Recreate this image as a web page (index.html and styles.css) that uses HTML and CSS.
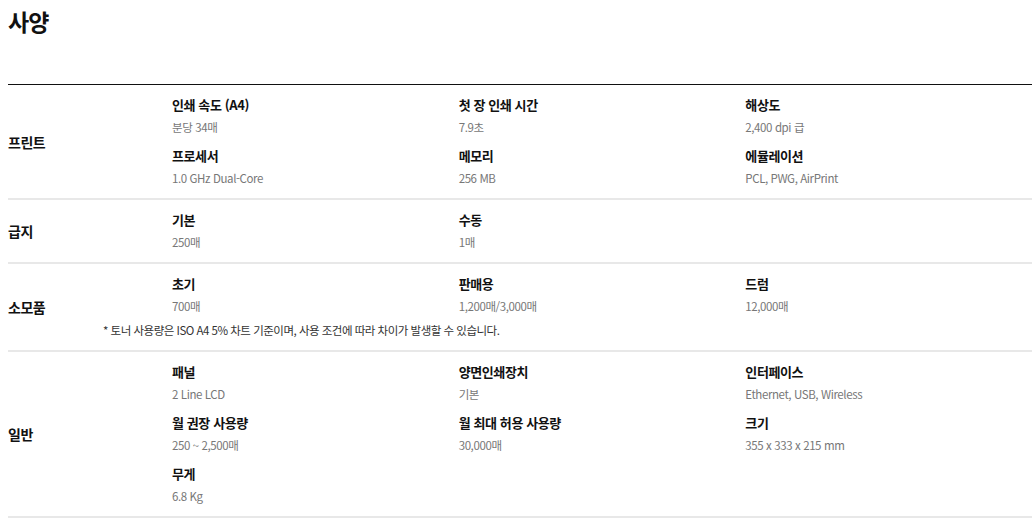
FILE: index.html
```html
<!DOCTYPE html>
<html lang="ko">
<head>
<meta charset="utf-8">
<title>사양</title>
<link rel="stylesheet" href="styles.css">
</head>
<body>
<div class="page">
  <h2 class="heading">사양</h2>
  <div class="specs">
    <section class="row">
      <div class="label">프린트</div>
      <div class="body">
        <div class="grid">
          <div class="item"><div class="t">인쇄 속도 (A4)</div><div class="v">분당 34매</div></div>
          <div class="item"><div class="t">첫 장 인쇄 시간</div><div class="v">7.9초</div></div>
          <div class="item"><div class="t">해상도</div><div class="v">2,400 dpi 급</div></div>
          <div class="item"><div class="t">프로세서</div><div class="v">1.0 GHz Dual-Core</div></div>
          <div class="item"><div class="t">메모리</div><div class="v">256 MB</div></div>
          <div class="item"><div class="t">에뮬레이션</div><div class="v">PCL, PWG, AirPrint</div></div>
        </div>
      </div>
    </section>
    <section class="row">
      <div class="label">급지</div>
      <div class="body">
        <div class="grid">
          <div class="item"><div class="t">기본</div><div class="v">250매</div></div>
          <div class="item"><div class="t">수동</div><div class="v">1매</div></div>
        </div>
      </div>
    </section>
    <section class="row has-note">
      <div class="label">소모품</div>
      <div class="body">
        <div class="grid">
          <div class="item"><div class="t">초기</div><div class="v">700매</div></div>
          <div class="item"><div class="t">판매용</div><div class="v">1,200매/3,000매</div></div>
          <div class="item"><div class="t">드럼</div><div class="v">12,000매</div></div>
        </div>
      </div>
      <p class="note">* 토너 사용량은 ISO A4 5% 차트 기준이며, 사용 조건에 따라 차이가 발생할 수 있습니다.</p>
    </section>
    <section class="row">
      <div class="label">일반</div>
      <div class="body">
        <div class="grid">
          <div class="item"><div class="t">패널</div><div class="v">2 Line LCD</div></div>
          <div class="item"><div class="t">양면인쇄장치</div><div class="v">기본</div></div>
          <div class="item"><div class="t">인터페이스</div><div class="v">Ethernet, USB, Wireless</div></div>
          <div class="item"><div class="t">월 권장 사용량</div><div class="v">250 ~ 2,500매</div></div>
          <div class="item"><div class="t">월 최대 허용 사용량</div><div class="v">30,000매</div></div>
          <div class="item"><div class="t">크기</div><div class="v">355 x 333 x 215 mm</div></div>
          <div class="item"><div class="t">무게</div><div class="v">6.8 Kg</div></div>
        </div>
      </div>
    </section>
  </div>
</div>
</body>
</html>
```

FILE: styles.css
```css
* { box-sizing: border-box; }
html, body { margin: 0; padding: 0; background: #fff; }
body {
  font-family: "Noto Sans CJK KR", "Noto Sans", sans-serif;
  color: #111;
}
.page {
  width: 1024px;
  margin-left: 8px;
}
.heading {
  margin: 0;
  padding-top: 5px;
  height: 84px;
  font-size: 23px;
  line-height: 32px;
  font-weight: 700;
  letter-spacing: -1px;
}
.specs {
  border-top: 1px solid #111;
}
.row {
  display: grid;
  grid-template-columns: 164px 1fr;
  border-bottom: 2px solid #e8e8e8;
}
.label {
  display: flex;
  align-items: center;
  font-size: 14px;
  font-weight: 700;
  letter-spacing: -0.5px;
}
.body {
  padding: 10px 0;
}
.has-note .label { grid-row: 1 / 3; grid-column: 1; }
.has-note .body { padding-bottom: 4px; grid-row: 1; grid-column: 2; }
.grid {
  display: grid;
  grid-template-columns: repeat(3, 1fr);
  row-gap: 9px;
}
.item .t {
  font-size: 13px;
  line-height: 20px;
  font-weight: 700;
  letter-spacing: -0.4px;
  margin-bottom: 2px;
}
.item .v {
  font-size: 11.5px;
  line-height: 20px;
  color: #777;
  letter-spacing: -0.4px;
}
.note {
  grid-row: 2;
  grid-column: 1 / -1;
  margin: 0 0 10px 95px;
  font-size: 11.5px;
  line-height: 20px;
  color: #333;
  letter-spacing: -0.5px;
}
```
